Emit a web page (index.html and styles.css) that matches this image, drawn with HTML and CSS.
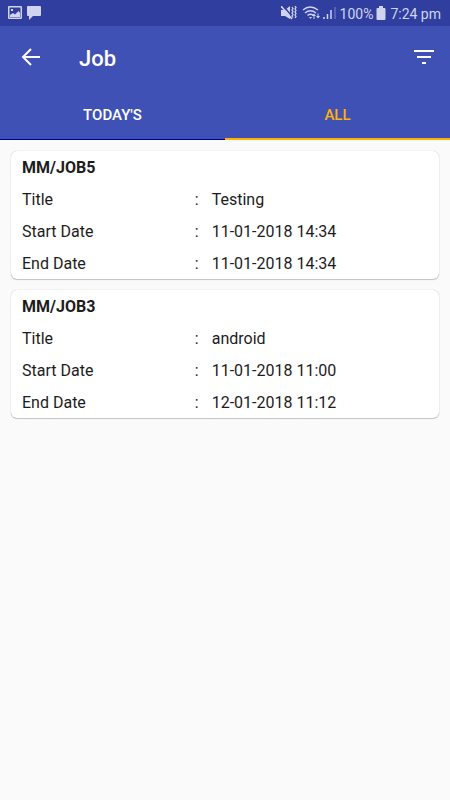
FILE: index.html
```html
<!DOCTYPE html>
<html lang="en">
<head>
<meta charset="utf-8">
<meta name="viewport" content="width=device-width, initial-scale=1">
<title>Job</title>
<link rel="stylesheet" href="styles.css">
</head>
<body>
<div class="status">
  <svg width="14" height="14" viewBox="0 0 14 14" aria-hidden="true"><path fill="currentColor" fill-rule="evenodd" d="M1 0h11.500q1.500 0 1.500 1v11q0 1-1.500 1H1q-1 0-1-1V1q0-1 1-1zM1.500 1.500v10h11v-10zM2 11V9l3-2 2 1.500L10.500 5 12 7v4zM3 3h2v2H3z"/></svg>
  <svg class="chat" width="14" height="14" viewBox="0 0 14 14" aria-hidden="true"><path fill="currentColor" d="M1 0h12q1 0 1 1v8q0 1-1 1H6l-4 4v-4H1q-1 0-1-1V1q0-1 1-1z"/></svg>
  <svg class="mute" width="16" height="14" viewBox="0 0 16 14" aria-hidden="true"><path fill="currentColor" d="M0 4h4l5-4v13L4 10H0z"/><path d="M1.500-1l11 13" stroke="#303f9f" stroke-width="1.500"/><path d="M0 0l11 13" stroke="currentColor" stroke-width="1.500"/><path d="M11 1l1 1.500L11 4l1 1.500L11 7l1 1.500L11 10l1 1.500M14 0l1 1.500L14 3l1 1.500L14 6l1 1.500L14 9l1 1.500-1 1.500" fill="none" stroke="currentColor" stroke-width="1.300"/></svg>
  <svg class="wifi" width="19" height="14" viewBox="0 0 19 14" aria-hidden="true"><g fill="none" stroke="currentColor" stroke-width="1.500"><path d="M1 4q7-6 15 0M3 7q5.500-4.500 11 0M5.500 9.500q3-2.500 6 0"/></g><path fill="currentColor" d="M7 11h3l-1.500 2zM10 10l2-2.500 2 2.500h-1.500v3h-1V10zM14 10h1.500V7.500h1V10H18l-2 2.500z"/></svg>
  <svg width="13" height="14" viewBox="0 0 13 14" aria-hidden="true"><path d="M1 11v2M4.500 8v5M8 4v9" stroke="currentColor" stroke-width="1.500"/><path d="M12 1v12" stroke="currentColor" opacity=".5"/></svg>
  <span class="level">100%</span>
  <svg class="battery" width="10" height="14" viewBox="0 0 10 14" aria-hidden="true"><path fill="currentColor" d="M3 0h4v2h1.500q1 0 1 1v10q0 1-1 1h-7q-1 0-1-1V3q0-1 1-1H3z"/></svg>
  <time>7:24 pm</time>
</div>
<header class="bar">
  <button class="icon" aria-label="Back"><svg width="20" height="20" viewBox="0 0 20 20"><path d="M19 10H2M10 2l-8 8 8 8" fill="none" stroke="currentColor" stroke-width="2"/></svg></button>
  <h1>Job</h1>
  <button class="icon" aria-label="Filter"><svg width="20" height="14" viewBox="0 0 20 14"><path fill="currentColor" d="M0 0h20v2H0zM3 6h14v2H3zM8 12h4v2H8z"/></svg></button>
</header>
<nav class="tabs">
  <a href="#today">TODAY'S</a>
  <a class="active" href="#all" aria-current="page">ALL</a>
</nav>
<main>
  <section class="card">
    <h2>MM/JOB5</h2>
    <dl>
      <div><dt>Title</dt><dd>Testing</dd></div>
      <div><dt>Start Date</dt><dd>11-01-2018 14:34</dd></div>
      <div><dt>End Date</dt><dd>11-01-2018 14:34</dd></div>
    </dl>
  </section>
  <section class="card">
    <h2>MM/JOB3</h2>
    <dl>
      <div><dt>Title</dt><dd>android</dd></div>
      <div><dt>Start Date</dt><dd>11-01-2018 11:00</dd></div>
      <div><dt>End Date</dt><dd>12-01-2018 11:12</dd></div>
    </dl>
  </section>
</main>
</body>
</html>
```
FILE: styles.css
```css
* { box-sizing: border-box; }
body {
  margin: 0;
  background: #fafafa;
  color: #1c1c1c;
  font-family: Roboto, "Liberation Sans", sans-serif;
  font-size: 16px;
}
svg { display: block; flex: none; }
.status {
  display: flex;
  align-items: center;
  height: 26px;
  padding: 0 9px 0 8px;
  background: #303f9f;
  color: #d0d4ee;
  font-size: 14px;
}
.status time, .level { line-height: 26px; padding-top: 2px; }
.chat { margin-left: 5px; }
.mute { margin-left: auto; }
.wifi { margin: 0 2px 0 5px; }
.level { margin-left: 4px; }
.battery { margin: 0 4px 0 3px; }
.bar {
  display: flex;
  align-items: center;
  height: 64px;
  padding: 0 8px 2px 13px;
  background: #3f51b5;
  color: #fff;
}
.icon {
  display: grid;
  place-items: center;
  width: 36px;
  height: 48px;
  padding: 0;
  border: 0;
  background: none;
  color: inherit;
}
h1 {
  flex: 1;
  margin: 0 0 0 30px;
  padding-top: 3px;
  font-size: 22px;
  font-weight: 500;
  line-height: 32px;
}
.tabs {
  display: flex;
  height: 50px;
  background: #3f51b5;
  border-bottom: 1px solid #000099;
}
.tabs a {
  flex: 1;
  height: 50px;
  color: #fff;
  font-size: 15px;
  font-weight: 500;
  line-height: 50px;
  text-align: center;
  text-decoration: none;
}
.tabs .active { color: #ffb300; border-bottom: 2px solid #ffb300; }
main {
  display: grid;
  gap: 11px;
  padding: 11px;
}
.card {
  padding: 1px 11px 0;
  border-radius: 6px;
  background: #fff;
  box-shadow: 0 0 1px rgba(0, 0, 0, .3), 0 1px 1px rgba(0, 0, 0, .2);
}
h2, dl, dd { margin: 0; }
h2 { font-size: 16px; font-weight: 700; line-height: 32px; }
dl { margin-bottom: -1px; }
dl div { display: grid; grid-template-columns: 45% 1fr; line-height: 32px; }
dt { display: flex; justify-content: space-between; padding-right: 6px; }
dt::after { content: ":"; }
dd { padding-left: 7px; }
```
